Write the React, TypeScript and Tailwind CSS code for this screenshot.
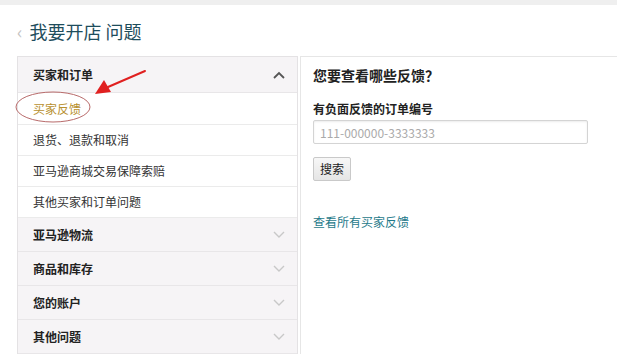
import React from "react";

const font = { fontFamily: '"Noto Sans CJK SC", "Noto Sans", sans-serif' };

const Chevron: React.FC<{ up?: boolean; dark?: boolean }> = ({ up, dark }) => (
  <svg width="12" height="8" viewBox="0 0 12 8" className={dark ? "text-[#555]" : "text-[#c8c8c8]"}>
    <path
      d={up ? "M1 7 L6 2 L11 7" : "M1 1 L6 6 L11 1"}
      fill="none"
      stroke="currentColor"
      strokeWidth={dark ? 1.8 : 1.4}
    />
  </svg>
);

const subItems = ["退货、退款和取消", "亚马逊商城交易保障索赔", "其他买家和订单问题"];
const groups = ["亚马逊物流", "商品和库存", "您的账户", "其他问题"];

export default function App() {
  return (
    <div className="relative w-[617px] h-[356px] overflow-hidden bg-white text-[#222]" style={font}>
      <div className="h-[5px] bg-[#efefef]" />
      <div className="flex items-center pl-[17px] pt-[13px] h-[38px]">
        <span className="text-[18px] text-[#c4c4c4] mr-[7px] leading-none">‹</span>
        <span className="text-[18px] text-[#1e4d5c] leading-none">我要开店 问题</span>
      </div>
      <div className="flex pl-[17px] mt-[13px]">
        <div className="w-[281px] border border-[#e4e2e4] border-b-0">
          <div className="h-[36px] flex items-center justify-between px-[15px] pr-[12px] bg-[#f6f4f6] border-b border-[#e8e6e8]">
            <span className="text-[12px] font-bold">买家和订单</span>
            <Chevron up dark />
          </div>
          <div className="h-[32px] flex items-center px-[15px] border-b border-[#ebebeb]">
            <span className="text-[12px] text-[#b8902f]">买家反馈</span>
          </div>
          {subItems.map((s) => (
            <div key={s} className="h-[31px] flex items-center px-[15px] border-b border-[#ebebeb]">
              <span className="text-[12px] text-[#333]">{s}</span>
            </div>
          ))}
          {groups.map((g) => (
            <div key={g} className="h-[34px] flex items-center justify-between px-[15px] pr-[12px] bg-[#f6f4f6] border-b border-[#e8e6e8]">
              <span className="text-[12px] font-bold">{g}</span>
              <Chevron />
            </div>
          ))}
        </div>
        <div className="flex-1 ml-[2px] border-t border-l border-[#e6e6e6] pl-[12px] pt-[8px]">
          <div className="text-[14px] font-bold text-[#222] leading-[20px]">您要查看哪些反馈？</div>
          <div className="mt-[16px] text-[12px] font-bold leading-[16px]">有负面反馈的订单编号</div>
          <input
            className="mt-[3px] w-[275px] h-[24px] border border-[#d4d4d4] rounded-[2px] px-[6px] text-[12px] placeholder:text-[#aaa] outline-none shadow-[inset_0_1px_2px_rgba(0,0,0,0.08)]"
            placeholder="111-000000-3333333"
            style={font}
          />
          <div className="mt-[11px]">
            <button
              className="h-[24px] w-[38px] text-[12px] border border-[#c9c9c9] rounded-[2px] bg-gradient-to-b from-[#f7f7f7] to-[#e5e5e5] text-[#222]"
              style={font}
            >
              搜索
            </button>
          </div>
          <div className="mt-[32px] text-[12px] text-[#1f7a8a]">查看所有买家反馈</div>
        </div>
      </div>
      <svg className="absolute left-0 top-0 pointer-events-none" width="617" height="356">
        <ellipse cx="53" cy="107" rx="37" ry="15" fill="none" stroke="#b86a6a" strokeWidth="1" />
        <path d="M145 71 L108 87" stroke="#e02020" strokeWidth="2" strokeLinecap="round" />
        <polygon points="95,94 104,80 111,92" fill="#e02020" />
      </svg>
    </div>
  );
}
